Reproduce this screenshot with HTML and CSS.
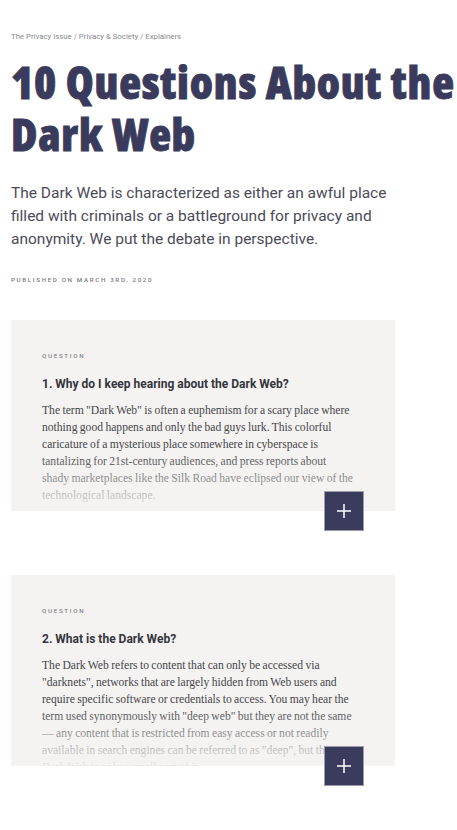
FILE: index.html
```html
<!DOCTYPE html>
<html lang="en">
<head>
<meta charset="utf-8">
<title>10 Questions About the Dark Web</title>
<link rel="stylesheet" href="styles.css">
</head>
<body>
<main class="page">
  <nav class="crumbs">The Privacy Issue / Privacy &amp; Society / Explainers</nav>
  <h1 class="title">10 Questions About the Dark Web</h1>
  <p class="lede">The Dark Web is characterized as either an awful place filled with criminals or a battleground for privacy and anonymity. We put the debate in perspective.</p>
  <p class="published">Published on March 3rd, 2020</p>

  <section class="card">
    <div class="card-inner">
      <div class="label">Question</div>
      <h2 class="question">1. Why do I keep hearing about the Dark Web?</h2>
      <p class="answer">The term "Dark Web" is often a euphemism for a scary place where nothing good happens and only the bad guys lurk. This colorful caricature of a mysterious place somewhere in cyberspace is tantalizing for 21st-century audiences, and press reports about shady marketplaces like the Silk Road have eclipsed our view of the technological landscape.</p>
    </div>
    <div class="fade"></div>
    <button class="expand" aria-label="Expand">
      <svg width="16" height="16" viewBox="0 0 16 16"><path d="M8 1v14M1 8h14" stroke="#fff" stroke-width="1.5" fill="none"/></svg>
    </button>
  </section>

  <section class="card">
    <div class="card-inner">
      <div class="label">Question</div>
      <h2 class="question">2. What is the Dark Web?</h2>
      <p class="answer">The Dark Web refers to content that can only be accessed via "darknets", networks that are largely hidden from Web users and require specific software or credentials to access. You may hear the term used synonymously with "deep web" but they are not the same — any content that is restricted from easy access or not readily available in search engines can be referred to as "deep", but the Dark Web is only a small part of it.</p>
    </div>
    <div class="fade"></div>
    <button class="expand" aria-label="Expand">
      <svg width="16" height="16" viewBox="0 0 16 16"><path d="M8 1v14M1 8h14" stroke="#fff" stroke-width="1.5" fill="none"/></svg>
    </button>
  </section>
</main>
</body>
</html>
```

FILE: styles.css
```css
html, body {
  margin: 0;
  padding: 0;
  background: #ffffff;
}

.page {
  padding: 32px 11px 0 11px;
  font-family: Roboto, "Liberation Sans", sans-serif;
}

.crumbs {
  font-size: 7.8px;
  line-height: 10px;
  color: #8a8a8e;
}

.title {
  margin: 14px -12px 0 0;
  font-family: "Open Sans", "DejaVu Sans", sans-serif;
  font-weight: 800;
  font-stretch: 75%;
  font-size: 45px;
  line-height: 52px;
  letter-spacing: 0.8px;
  color: #3a3b5c;
  -webkit-text-stroke: 0.9px #3a3b5c;
}

.lede {
  margin: 22px 0 0 0;
  font-size: 15.5px;
  line-height: 23px;
  color: #4b4b58;
  max-width: 390px;
}

.published {
  margin: 24px 0 0 0;
  font-size: 6.2px;
  line-height: 10px;
  text-transform: uppercase;
  letter-spacing: 1.65px;
  font-weight: 500;
  color: #7a7a80;
}

.card {
  position: relative;
  width: 384px;
  height: 191px;
  margin: 35px 0 64px 0;
  background: #f4f3f1;
}

.card + .card {
  margin-top: 0;
}

.card-inner {
  height: 191px;
  overflow: hidden;
  padding: 31px 40px 0 31px;
  box-sizing: border-box;
}

.label {
  font-size: 6.2px;
  line-height: 10px;
  text-transform: uppercase;
  letter-spacing: 1.7px;
  font-weight: 500;
  color: #86868c;
}

.question {
  margin: 15px 0 0 0;
  font-size: 12px;
  line-height: 16px;
  font-weight: 700;
  color: #35353d;
  white-space: nowrap;
}

.answer {
  margin: 10px 0 0 0;
  font-family: "Liberation Serif", "DejaVu Serif", serif;
  font-size: 11.6px;
  word-spacing: -0.5px;
  line-height: 17px;
  color: #45454a;
}

.fade {
  position: absolute;
  left: 0;
  right: 0;
  bottom: 0;
  height: 60px;
  background: linear-gradient(to bottom, rgba(244, 243, 241, 0) 0%, rgba(244, 243, 241, 0.45) 50%, rgba(244, 243, 241, 0.8) 83%, rgba(244, 243, 241, 0.92) 100%);
}

.expand {
  position: absolute;
  right: 31px;
  bottom: -20px;
  width: 40px;
  height: 40px;
  padding: 0;
  margin: 0;
  background: #3b3c5d;
  border: 1px solid #9c9cab;
  display: flex;
  align-items: center;
  justify-content: center;
  box-sizing: border-box;
}
```
